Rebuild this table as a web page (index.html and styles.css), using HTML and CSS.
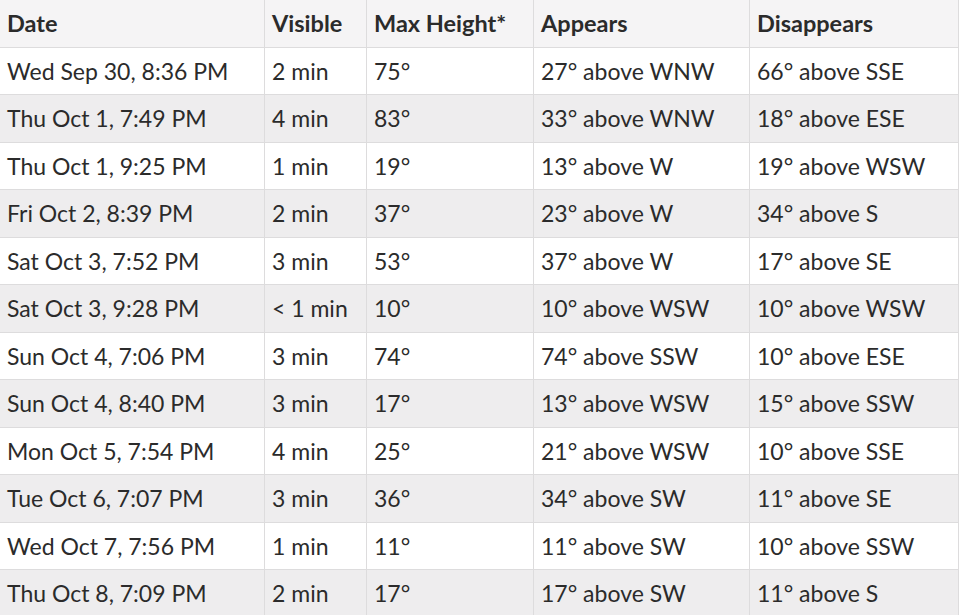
FILE: index.html
```html
<!DOCTYPE html>
<html>
<head>
<meta charset="utf-8">
<link rel="stylesheet" href="styles.css">
</head>
<body>
<table class="passes">
<colgroup>
<col class="c-date"><col class="c-vis"><col class="c-max"><col class="c-app"><col class="c-dis">
</colgroup>
<thead>
<tr><th>Date</th><th>Visible</th><th>Max Height*</th><th>Appears</th><th>Disappears</th></tr>
</thead>
<tbody>
<tr><td>Wed Sep 30, 8:36 PM</td><td>2 min</td><td>75°</td><td>27° above WNW</td><td>66° above SSE</td></tr>
<tr><td>Thu Oct 1, 7:49 PM</td><td>4 min</td><td>83°</td><td>33° above WNW</td><td>18° above ESE</td></tr>
<tr><td>Thu Oct 1, 9:25 PM</td><td>1 min</td><td>19°</td><td>13° above W</td><td>19° above WSW</td></tr>
<tr><td>Fri Oct 2, 8:39 PM</td><td>2 min</td><td>37°</td><td>23° above W</td><td>34° above S</td></tr>
<tr><td>Sat Oct 3, 7:52 PM</td><td>3 min</td><td>53°</td><td>37° above W</td><td>17° above SE</td></tr>
<tr><td>Sat Oct 3, 9:28 PM</td><td>&lt; 1 min</td><td>10°</td><td>10° above WSW</td><td>10° above WSW</td></tr>
<tr><td>Sun Oct 4, 7:06 PM</td><td>3 min</td><td>74°</td><td>74° above SSW</td><td>10° above ESE</td></tr>
<tr><td>Sun Oct 4, 8:40 PM</td><td>3 min</td><td>17°</td><td>13° above WSW</td><td>15° above SSW</td></tr>
<tr><td>Mon Oct 5, 7:54 PM</td><td>4 min</td><td>25°</td><td>21° above WSW</td><td>10° above SSE</td></tr>
<tr><td>Tue Oct 6, 7:07 PM</td><td>3 min</td><td>36°</td><td>34° above SW</td><td>11° above SE</td></tr>
<tr><td>Wed Oct 7, 7:56 PM</td><td>1 min</td><td>11°</td><td>11° above SW</td><td>10° above SSW</td></tr>
<tr><td>Thu Oct 8, 7:09 PM</td><td>2 min</td><td>17°</td><td>17° above SW</td><td>11° above S</td></tr>
</tbody>
</table>
</body>
</html>
```
FILE: styles.css
```css
html, body {
  margin: 0;
  padding: 0;
  background: #ffffff;
}
body {
  overflow: hidden;
  font-family: Lato, "Liberation Sans", sans-serif;
  color: #2b2b2b;
}
.passes {
  border-collapse: collapse;
  table-layout: fixed;
  width: 959px;
  margin-left: -1px;
  font-size: 23px;
  line-height: 26.5px;
}
.c-date { width: 265px; }
.c-vis { width: 102px; }
.c-max { width: 167px; }
.c-app { width: 216px; }
.c-dis { width: 209px; }
.passes th,
.passes td {
  border: 1px solid #dddcdd;
  padding: 10px 8px 10px 7px;
  text-align: left;
  white-space: nowrap;
  vertical-align: middle;
}
.passes th {
  font-weight: 700;
  font-size: 23.5px;
  background: #f5f4f5;
  border-top: none;
}
.passes tbody tr:nth-child(even) td {
  background: #eeedee;
}
.passes tbody tr:nth-child(odd) td {
  background: #ffffff;
}
```
